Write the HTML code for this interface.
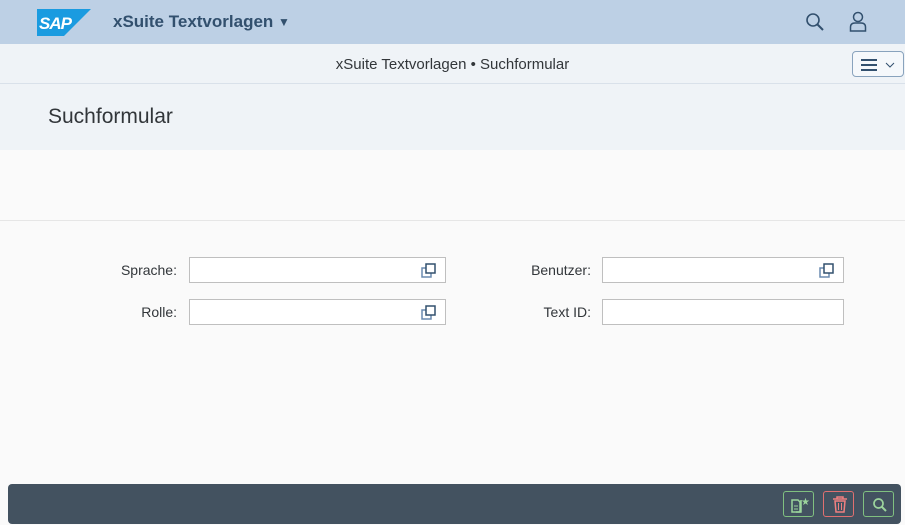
<!DOCTYPE html>
<html><head><style>
*{box-sizing:border-box;margin:0;padding:0}
body{width:905px;height:525px;overflow:hidden;background:#fafafa;font-family:"Liberation Sans",sans-serif;position:relative}
.shell{position:absolute;left:0;top:0;width:905px;height:44px;background:#bdd0e5}
.title{position:absolute;left:113px;top:12px;font-size:17px;font-weight:bold;color:#32506e}
.sub{position:absolute;left:0;top:44px;width:905px;height:40px;background:#eff3f7;border-bottom:1px solid #d9e1ea;text-align:center;font-size:15px;color:#32363a;line-height:41px}
.hdr{position:absolute;left:0;top:84px;width:905px;height:66px;background:#eff3f7}
.hdr div{position:absolute;left:48px;top:21px;font-size:21px;color:#32363a}
.line{position:absolute;left:0;top:220px;width:905px;height:1px;background:#e6e6e6}
.lbl{position:absolute;font-size:14px;color:#32363a;text-align:right;width:120px}
.inp{position:absolute;height:26px;background:#fff;border:1px solid #bfbfbf}
.vh{position:absolute;right:9px;top:5px}
.foot{position:absolute;left:8px;top:484px;width:893px;height:40px;background:#435260;border-radius:4px}
.btn{position:absolute;top:7px;width:31px;height:26px;border-radius:3px;border:1px solid #80c080}
</style></head><body>
<div class="shell">
<svg style="position:absolute;left:37px;top:9px" width="54" height="27"><polygon points="0,0 54,0 27,27 0,27" fill="#1a9be0"/><text x="2" y="20" font-family="Liberation Sans" font-weight="bold" font-style="italic" font-size="17" fill="#fff" letter-spacing="-1">SAP</text></svg>
<div class="title">xSuite Textvorlagen <span style="font-size:12px;position:relative;top:-1px">▼</span></div>
<svg style="position:absolute;left:805px;top:12px" width="20" height="20"><circle cx="8" cy="8" r="6" fill="none" stroke="#32506e" stroke-width="1.6"/><line x1="12.5" y1="12.5" x2="18" y2="18" stroke="#32506e" stroke-width="2"/></svg>
<svg style="position:absolute;left:849px;top:11px" width="18" height="21"><circle cx="9" cy="6" r="4.5" fill="none" stroke="#32506e" stroke-width="1.5"/><path d="M1.5 20 V16 Q1.5 12 6 12 H12 Q16.5 12 16.5 16 V20 Z" fill="none" stroke="#32506e" stroke-width="1.5"/></svg>
</div>
<div class="sub">xSuite Textvorlagen • Suchformular</div>
<div style="position:absolute;left:852px;top:51px;width:52px;height:26px;border:1px solid #89a3bd;border-radius:4px;background:#f5f8fb">
<svg style="position:absolute;left:7px;top:6px" width="40" height="14"><g stroke="#32506e" stroke-width="2"><line x1="1" y1="2" x2="17" y2="2"/><line x1="1" y1="7" x2="17" y2="7"/><line x1="1" y1="12" x2="17" y2="12"/></g><polyline points="26,5 30,9 34,5" fill="none" stroke="#32506e" stroke-width="1"/></svg></div>
<div class="hdr"><div>Suchformular</div></div>
<div class="line"></div>
<div class="lbl" style="left:57px;top:262px">Sprache:</div>
<div class="lbl" style="left:57px;top:304px">Rolle:</div>
<div class="lbl" style="left:471px;top:262px">Benutzer:</div>
<div class="lbl" style="left:471px;top:304px">Text ID:</div>
<div class="inp" style="left:189px;top:257px;width:257px"><svg class="vh" width="15" height="15"><rect x="1" y="5" width="9" height="9" fill="none" stroke="#6b8bb0" stroke-width="1.5"/><rect x="5" y="1" width="9" height="9" fill="#fff" stroke="#32506e" stroke-width="1.5"/></svg></div>
<div class="inp" style="left:189px;top:299px;width:257px"><svg class="vh" width="15" height="15"><rect x="1" y="5" width="9" height="9" fill="none" stroke="#6b8bb0" stroke-width="1.5"/><rect x="5" y="1" width="9" height="9" fill="#fff" stroke="#32506e" stroke-width="1.5"/></svg></div>
<div class="inp" style="left:602px;top:257px;width:242px"><svg class="vh" width="15" height="15"><rect x="1" y="5" width="9" height="9" fill="none" stroke="#6b8bb0" stroke-width="1.5"/><rect x="5" y="1" width="9" height="9" fill="#fff" stroke="#32506e" stroke-width="1.5"/></svg></div>
<div class="inp" style="left:602px;top:299px;width:242px"></div>
<div class="foot">
<div class="btn" style="left:775px"><svg style="position:absolute;left:6px;top:4px" width="20" height="18"><path d="M2 4 H8 L10 6 V16 H2 Z" fill="none" stroke="#9cd49c" stroke-width="1.5"/><path d="M4 10 H8 M4 13 H8" stroke="#9cd49c"/><path d="M11 4 V16 H6" fill="none" stroke="#9cd49c" stroke-width="1.5"/><text x="11" y="9" font-size="10" fill="#9cd49c">★</text></svg></div>
<div class="btn" style="left:815px;border-color:#e07070"><svg style="position:absolute;left:8px;top:4px" width="16" height="18"><path d="M1 3 H15 M5 3 V1 H11 V3" fill="none" stroke="#f08080" stroke-width="1.5"/><path d="M3 5 H13 L12 16 H4 Z" fill="none" stroke="#f08080" stroke-width="1.5"/><path d="M6.5 7 V14 M9.5 7 V14" stroke="#f08080"/></svg></div>
<div class="btn" style="left:855px"><svg style="position:absolute;left:8px;top:5px" width="16" height="16"><circle cx="6.5" cy="6.5" r="4.5" fill="none" stroke="#9cd49c" stroke-width="1.7"/><line x1="10" y1="10" x2="14" y2="14" stroke="#9cd49c" stroke-width="2"/></svg></div>
</div>
</body></html>
